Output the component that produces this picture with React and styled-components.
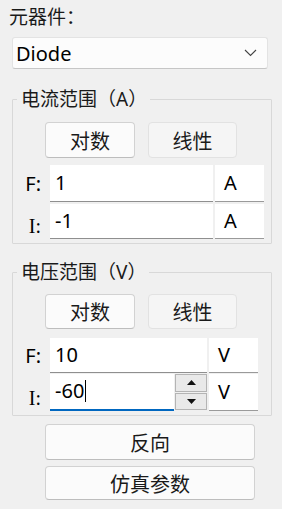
import React from "react";
import styled, { createGlobalStyle } from "styled-components";

const GlobalStyle = createGlobalStyle`
  body {
    margin: 0;
    background: #f0f0f0;
    font-family: "Noto Sans", "Noto Sans CJK SC", sans-serif;
    color: #000;
  }
`;

const Page = styled.div`
  width: 282px;
  height: 509px;
  padding-top: 5px;
  box-sizing: border-box;
  overflow: hidden;
`;

const Title = styled.div`
  margin-left: 9px;
  height: 24px;
  line-height: 24px;
  font-size: 19px;
  color: #1a1a1a;
`;

const Combo = styled.div`
  margin: 8px 0 0 12px;
  width: 256px;
  height: 32px;
  box-sizing: border-box;
  display: flex;
  align-items: center;
  justify-content: space-between;
  padding: 0 10px 0 3px;
  background: #fcfcfc;
  border: 1px solid #e3e3e3;
  border-bottom-color: #c6c6c6;
  border-radius: 3px;
  font-size: 20px;
`;

const Group = styled.fieldset`
  margin: ${(p) => p.$top}px 0 0 12px;
  width: 260px;
  box-sizing: border-box;
  padding: 0 0 4px 0;
  border: 1px solid #d8d8d8;
  border-radius: 1px;
  min-inline-size: 0;
`;

const Legend = styled.legend`
  margin-left: 4px;
  padding: 0 3px 0 4px;
  font-size: 19px;
  line-height: 22px;
  color: #1a1a1a;
`;

const ButtonRow = styled.div`
  display: flex;
  gap: 13px;
  margin: ${(p) => p.$top}px 0 0 32px;
`;

const ModeButton = styled.div`
  width: ${(p) => p.$w}px;
  height: ${(p) => p.$h}px;
  box-sizing: border-box;
  display: flex;
  align-items: center;
  justify-content: center;
  font-size: 20px;
  color: #1a1a1a;
  border-radius: 4px;
  background: ${(p) => (p.$flat ? "#f5f5f5" : "#fbfbfb")};
  border: 1px solid ${(p) => (p.$flat ? "#e2e2e2" : "#d2d2d2")};
  border-bottom-color: ${(p) => (p.$flat ? "#e2e2e2" : "#bdbdbd")};
`;

const Fields = styled.div`
  display: grid;
  grid-template-columns: 35px ${(p) => p.$input}px 49px;
  grid-template-rows: ${(p) => p.$rows};
  column-gap: 2px;
  row-gap: ${(p) => p.$gap}px;
  margin-top: ${(p) => p.$top}px;
`;

const RowLabel = styled.div`
  display: flex;
  justify-content: flex-end;
  align-items: ${(p) => (p.$low ? "flex-end" : "center")};
  padding-right: 7px;
  padding-bottom: ${(p) => (p.$low ? 2 : 0)}px;
  font-size: 20px;
  line-height: 22px;
  font-family: ${(p) => (p.$serif ? '"Liberation Serif", serif' : "inherit")};
`;

const InputCell = styled.div`
  display: flex;
  min-width: 0;
`;

const Field = styled.div`
  flex: 1;
  box-sizing: border-box;
  display: flex;
  align-items: center;
  padding: 0 0 ${(p) => (p.$focus ? 2 : 1)}px 5px;
  background: #fff;
  font-size: 20px;
  border-bottom: ${(p) => (p.$focus ? "2px solid #0067c0" : "1px solid #8f8f8f")};
`;

const Caret = styled.span`
  display: inline-block;
  width: 1px;
  height: 22px;
  background: #000;
  margin-left: 1px;
`;

const Spin = styled.div`
  width: 32px;
  margin-left: 1px;
  display: flex;
  flex-direction: column;
  gap: 1px;
  padding-bottom: 1px;
  box-sizing: border-box;
`;

const SpinHalf = styled.div`
  flex: 1;
  display: flex;
  align-items: center;
  justify-content: center;
  background: #e9e9e9;
  border: 1px solid #b4b4b4;
`;

const Unit = styled.div`
  box-sizing: border-box;
  display: flex;
  align-items: center;
  padding: 0 0 1px 9px;
  background: #fff;
  font-size: 20px;
  border-bottom: 1px solid #9a9a9a;
`;

const ActionButton = styled.div`
  margin: ${(p) => p.$top}px 0 0 45px;
  width: 210px;
  height: ${(p) => p.$h}px;
  box-sizing: border-box;
  display: flex;
  align-items: center;
  justify-content: center;
  font-size: 20px;
  color: #1a1a1a;
  background: #fbfbfb;
  border: 1px solid #d2d2d2;
  border-bottom-color: #bdbdbd;
  border-radius: 4px;
`;

const Chevron = () => (
  <svg width="13" height="8" viewBox="0 0 13 8">
    <path d="M1 1 L6.5 6.5 L12 1" fill="none" stroke="#444" strokeWidth="1.1" />
  </svg>
);

const Arrow = ({ up }) => (
  <svg width="9" height="5" viewBox="0 0 9 5">
    <path d={up ? "M0 5 L4.5 0 L9 5 Z" : "M0 0 L4.5 5 L9 0 Z"} fill="#111" />
  </svg>
);

const App = () => {
  return (
    <Page>
      <GlobalStyle />
      <Title>元器件：</Title>
      <Combo>
        <span>Diode</span>
        <Chevron />
      </Combo>

      <Group $top={19}>
        <Legend>电流范围（A）</Legend>
        <ButtonRow $top={12}>
          <ModeButton $w={90} $h={36}>对数</ModeButton>
          <ModeButton $w={89} $h={36} $flat>线性</ModeButton>
        </ButtonRow>
        <Fields $top={7} $input={163} $rows="37px 35px" $gap={2}>
          <RowLabel>F:</RowLabel>
          <InputCell>
            <Field>1</Field>
          </InputCell>
          <Unit>A</Unit>
          <RowLabel $low $serif>I:</RowLabel>
          <InputCell>
            <Field>-1</Field>
          </InputCell>
          <Unit>A</Unit>
        </Fields>
      </Group>

      <Group $top={17}>
        <Legend>电压范围（V）</Legend>
        <ButtonRow $top={11}>
          <ModeButton $w={90} $h={35}>对数</ModeButton>
          <ModeButton $w={89} $h={35} $flat>线性</ModeButton>
        </ButtonRow>
        <Fields $top={9} $input={157} $rows="35px 37px" $gap={1}>
          <RowLabel>F:</RowLabel>
          <InputCell>
            <Field>10</Field>
          </InputCell>
          <Unit>V</Unit>
          <RowLabel $low $serif>I:</RowLabel>
          <InputCell>
            <Field $focus>
              -60
              <Caret />
            </Field>
            <Spin>
              <SpinHalf>
                <Arrow up />
              </SpinHalf>
              <SpinHalf>
                <Arrow />
              </SpinHalf>
            </Spin>
          </InputCell>
          <Unit>V</Unit>
        </Fields>
      </Group>

      <ActionButton $top={8} $h={36}>反向</ActionButton>
      <ActionButton $top={6} $h={34}>仿真参数</ActionButton>
    </Page>
  );
};

export default App;
